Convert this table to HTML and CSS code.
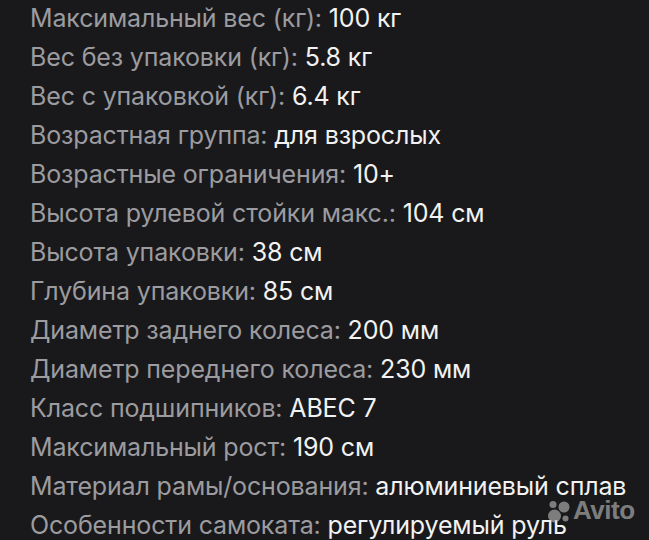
FILE: index.html
```html
<!DOCTYPE html>
<html lang="ru">
<head>
<meta charset="utf-8">
<link rel="stylesheet" href="styles.css">
</head>
<body>
<div class="specs">
  <div class="row"><span class="label">Максимальный вес (кг):</span> <span class="value">100 кг</span></div>
  <div class="row"><span class="label">Вес без упаковки (кг):</span> <span class="value">5.8 кг</span></div>
  <div class="row"><span class="label">Вес с упаковкой (кг):</span> <span class="value">6.4 кг</span></div>
  <div class="row"><span class="label">Возрастная группа:</span> <span class="value">для взрослых</span></div>
  <div class="row"><span class="label">Возрастные ограничения:</span> <span class="value">10+</span></div>
  <div class="row"><span class="label">Высота рулевой стойки макс.:</span> <span class="value">104 см</span></div>
  <div class="row"><span class="label">Высота упаковки:</span> <span class="value">38 см</span></div>
  <div class="row"><span class="label">Глубина упаковки:</span> <span class="value">85 см</span></div>
  <div class="row"><span class="label">Диаметр заднего колеса:</span> <span class="value">200 мм</span></div>
  <div class="row"><span class="label">Диаметр переднего колеса:</span> <span class="value">230 мм</span></div>
  <div class="row"><span class="label">Класс подшипников:</span> <span class="value">ABEC 7</span></div>
  <div class="row"><span class="label">Максимальный рост:</span> <span class="value">190 см</span></div>
  <div class="row"><span class="label">Материал рамы/основания:</span> <span class="value">алюминиевый сплав</span></div>
  <div class="row"><span class="label">Особенности самоката:</span> <span class="value">регулируемый руль</span></div>
</div>
<div class="watermark">
  <svg class="wm-icon" width="24" height="26" viewBox="0 0 24 26">
    <circle cx="7.5" cy="18" r="6.5"/>
    <circle cx="17" cy="9" r="5.5"/>
    <circle cx="6" cy="6.5" r="3.5"/>
    <circle cx="18.5" cy="20.5" r="3"/>
  </svg>
  <span class="wm-text">Avito</span>
</div>
</body>
</html>
```
FILE: styles.css
```css
html, body {
  margin: 0;
  padding: 0;
  background: #19191b;
  width: 649px;
  height: 540px;
  overflow: hidden;
}
body {
  position: relative;
  font-family: Inter, "Noto Sans", sans-serif;
}
.specs {
  padding: 0 0 0 30px;
  display: flex;
  flex-direction: column;
}
.row {
  height: 39px;
  line-height: 36px;
  font-size: 25px;
  white-space: nowrap;
  letter-spacing: -0.15px;
}
.label { color: #9c9ca0; }
.value { color: #f2f2f2; }
.watermark {
  position: absolute;
  left: 547px;
  top: 495px;
  display: flex;
  align-items: center;
  gap: 2px;
  opacity: 0.55;
}
.wm-icon { fill: #cfcfcf; }
.wm-text {
  color: #cfcfcf;
  font-family: "Liberation Sans", Arial, sans-serif;
  font-weight: bold;
  font-size: 26px;
  letter-spacing: -0.5px;
}
```
